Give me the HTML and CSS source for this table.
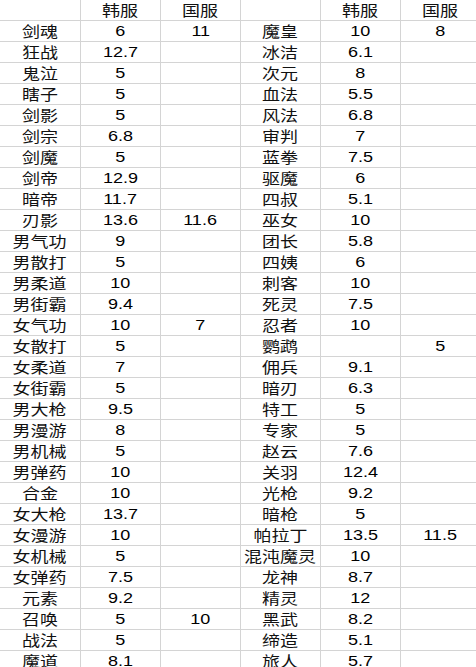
FILE: index.html
```html
<!DOCTYPE html>
<html lang="zh">
<head>
<meta charset="utf-8">
<title>表格</title>
<link rel="stylesheet" href="styles.css">
</head>
<body>
<div class="sheet">
  <div class="row"><div class="c"></div><div class="c"><span class="t">韩服</span></div><div class="c"><span class="t">国服</span></div><div class="c"></div><div class="c"><span class="t">韩服</span></div><div class="c"><span class="t">国服</span></div></div>
  <div class="row"><div class="c"><span class="t">剑魂</span></div><div class="c"><span class="n">6</span></div><div class="c"><span class="n">11</span></div><div class="c"><span class="t">魔皇</span></div><div class="c"><span class="n">10</span></div><div class="c"><span class="n">8</span></div></div>
  <div class="row"><div class="c"><span class="t">狂战</span></div><div class="c"><span class="n">12.7</span></div><div class="c"></div><div class="c"><span class="t">冰洁</span></div><div class="c"><span class="n">6.1</span></div><div class="c"></div></div>
  <div class="row"><div class="c"><span class="t">鬼泣</span></div><div class="c"><span class="n">5</span></div><div class="c"></div><div class="c"><span class="t">次元</span></div><div class="c"><span class="n">8</span></div><div class="c"></div></div>
  <div class="row"><div class="c"><span class="t">瞎子</span></div><div class="c"><span class="n">5</span></div><div class="c"></div><div class="c"><span class="t">血法</span></div><div class="c"><span class="n">5.5</span></div><div class="c"></div></div>
  <div class="row"><div class="c"><span class="t">剑影</span></div><div class="c"><span class="n">5</span></div><div class="c"></div><div class="c"><span class="t">风法</span></div><div class="c"><span class="n">6.8</span></div><div class="c"></div></div>
  <div class="row"><div class="c"><span class="t">剑宗</span></div><div class="c"><span class="n">6.8</span></div><div class="c"></div><div class="c"><span class="t">审判</span></div><div class="c"><span class="n">7</span></div><div class="c"></div></div>
  <div class="row"><div class="c"><span class="t">剑魔</span></div><div class="c"><span class="n">5</span></div><div class="c"></div><div class="c"><span class="t">蓝拳</span></div><div class="c"><span class="n">7.5</span></div><div class="c"></div></div>
  <div class="row"><div class="c"><span class="t">剑帝</span></div><div class="c"><span class="n">12.9</span></div><div class="c"></div><div class="c"><span class="t">驱魔</span></div><div class="c"><span class="n">6</span></div><div class="c"></div></div>
  <div class="row"><div class="c"><span class="t">暗帝</span></div><div class="c"><span class="n">11.7</span></div><div class="c"></div><div class="c"><span class="t">四叔</span></div><div class="c"><span class="n">5.1</span></div><div class="c"></div></div>
  <div class="row"><div class="c"><span class="t">刃影</span></div><div class="c"><span class="n">13.6</span></div><div class="c"><span class="n">11.6</span></div><div class="c"><span class="t">巫女</span></div><div class="c"><span class="n">10</span></div><div class="c"></div></div>
  <div class="row"><div class="c"><span class="t">男气功</span></div><div class="c"><span class="n">9</span></div><div class="c"></div><div class="c"><span class="t">团长</span></div><div class="c"><span class="n">5.8</span></div><div class="c"></div></div>
  <div class="row"><div class="c"><span class="t">男散打</span></div><div class="c"><span class="n">5</span></div><div class="c"></div><div class="c"><span class="t">四姨</span></div><div class="c"><span class="n">6</span></div><div class="c"></div></div>
  <div class="row"><div class="c"><span class="t">男柔道</span></div><div class="c"><span class="n">10</span></div><div class="c"></div><div class="c"><span class="t">刺客</span></div><div class="c"><span class="n">10</span></div><div class="c"></div></div>
  <div class="row"><div class="c"><span class="t">男街霸</span></div><div class="c"><span class="n">9.4</span></div><div class="c"></div><div class="c"><span class="t">死灵</span></div><div class="c"><span class="n">7.5</span></div><div class="c"></div></div>
  <div class="row"><div class="c"><span class="t">女气功</span></div><div class="c"><span class="n">10</span></div><div class="c"><span class="n">7</span></div><div class="c"><span class="t">忍者</span></div><div class="c"><span class="n">10</span></div><div class="c"></div></div>
  <div class="row"><div class="c"><span class="t">女散打</span></div><div class="c"><span class="n">5</span></div><div class="c"></div><div class="c"><span class="t">鹦鹉</span></div><div class="c"></div><div class="c"><span class="n">5</span></div></div>
  <div class="row"><div class="c"><span class="t">女柔道</span></div><div class="c"><span class="n">7</span></div><div class="c"></div><div class="c"><span class="t">佣兵</span></div><div class="c"><span class="n">9.1</span></div><div class="c"></div></div>
  <div class="row"><div class="c"><span class="t">女街霸</span></div><div class="c"><span class="n">5</span></div><div class="c"></div><div class="c"><span class="t">暗刃</span></div><div class="c"><span class="n">6.3</span></div><div class="c"></div></div>
  <div class="row"><div class="c"><span class="t">男大枪</span></div><div class="c"><span class="n">9.5</span></div><div class="c"></div><div class="c"><span class="t">特工</span></div><div class="c"><span class="n">5</span></div><div class="c"></div></div>
  <div class="row"><div class="c"><span class="t">男漫游</span></div><div class="c"><span class="n">8</span></div><div class="c"></div><div class="c"><span class="t">专家</span></div><div class="c"><span class="n">5</span></div><div class="c"></div></div>
  <div class="row"><div class="c"><span class="t">男机械</span></div><div class="c"><span class="n">5</span></div><div class="c"></div><div class="c"><span class="t">赵云</span></div><div class="c"><span class="n">7.6</span></div><div class="c"></div></div>
  <div class="row"><div class="c"><span class="t">男弹药</span></div><div class="c"><span class="n">10</span></div><div class="c"></div><div class="c"><span class="t">关羽</span></div><div class="c"><span class="n">12.4</span></div><div class="c"></div></div>
  <div class="row"><div class="c"><span class="t">合金</span></div><div class="c"><span class="n">10</span></div><div class="c"></div><div class="c"><span class="t">光枪</span></div><div class="c"><span class="n">9.2</span></div><div class="c"></div></div>
  <div class="row"><div class="c"><span class="t">女大枪</span></div><div class="c"><span class="n">13.7</span></div><div class="c"></div><div class="c"><span class="t">暗枪</span></div><div class="c"><span class="n">5</span></div><div class="c"></div></div>
  <div class="row"><div class="c"><span class="t">女漫游</span></div><div class="c"><span class="n">10</span></div><div class="c"></div><div class="c"><span class="t">帕拉丁</span></div><div class="c"><span class="n">13.5</span></div><div class="c"><span class="n">11.5</span></div></div>
  <div class="row"><div class="c"><span class="t">女机械</span></div><div class="c"><span class="n">5</span></div><div class="c"></div><div class="c"><span class="t">混沌魔灵</span></div><div class="c"><span class="n">10</span></div><div class="c"></div></div>
  <div class="row"><div class="c"><span class="t">女弹药</span></div><div class="c"><span class="n">7.5</span></div><div class="c"></div><div class="c"><span class="t">龙神</span></div><div class="c"><span class="n">8.7</span></div><div class="c"></div></div>
  <div class="row"><div class="c"><span class="t">元素</span></div><div class="c"><span class="n">9.2</span></div><div class="c"></div><div class="c"><span class="t">精灵</span></div><div class="c"><span class="n">12</span></div><div class="c"></div></div>
  <div class="row"><div class="c"><span class="t">召唤</span></div><div class="c"><span class="n">5</span></div><div class="c"><span class="n">10</span></div><div class="c"><span class="t">黑武</span></div><div class="c"><span class="n">8.2</span></div><div class="c"></div></div>
  <div class="row"><div class="c"><span class="t">战法</span></div><div class="c"><span class="n">5</span></div><div class="c"></div><div class="c"><span class="t">缔造</span></div><div class="c"><span class="n">5.1</span></div><div class="c"></div></div>
  <div class="row"><div class="c"><span class="t">魔道</span></div><div class="c"><span class="n">8.1</span></div><div class="c"></div><div class="c"><span class="t">旅人</span></div><div class="c"><span class="n">5.7</span></div><div class="c"></div></div>
</div>
</body>
</html>
```

FILE: styles.css
```css
html, body {
  margin: 0;
  padding: 0;
  background: #ffffff;
  overflow: hidden;
}

.sheet {
  width: 480px;
  display: flex;
  flex-direction: column;
}

.row {
  display: grid;
  grid-template-columns: repeat(6, 80px);
  height: 21px;
  box-sizing: border-box;
  border-bottom: 1px solid #d4d4d4;
}

.c {
  display: flex;
  align-items: center;
  justify-content: center;
  box-sizing: border-box;
  height: 20px;
  overflow: visible;
  white-space: nowrap;
}

.c + .c {
  border-left: 1px solid #d4d4d4;
}

.t {
  display: inline-block;
  font-family: "Noto Sans CJK SC", "Noto Sans", sans-serif;
  font-size: 15px;
  line-height: 20px;
  color: #111;
  transform: scaleX(1.2);
}

.n {
  display: inline-block;
  font-family: "Liberation Sans", Arial, sans-serif;
  font-size: 15px;
  line-height: 20px;
  color: #000;
  transform: scaleX(1.2);
}
```
